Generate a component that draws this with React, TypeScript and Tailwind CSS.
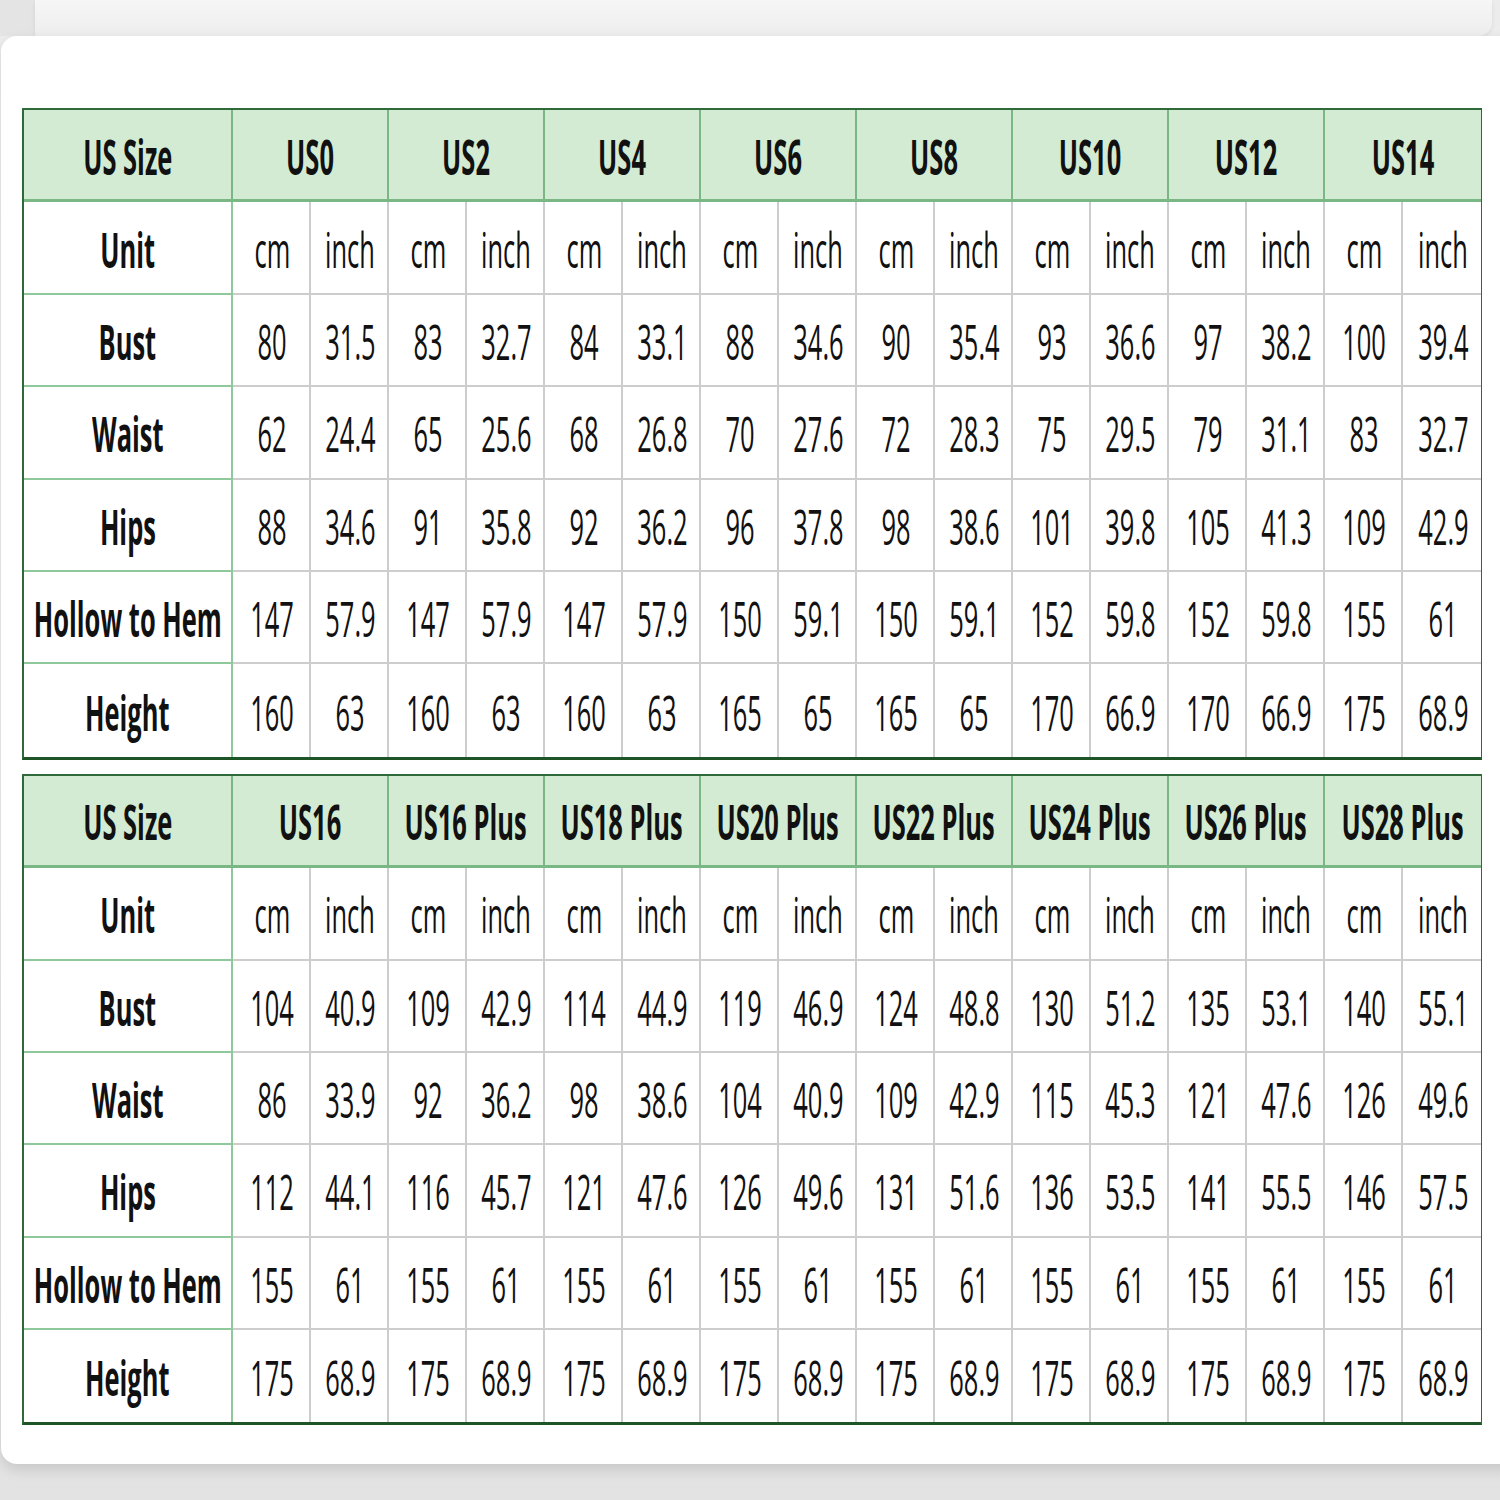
import React from "react";

type Row = { label: string; values: string[] };

const table1Head = ["US0", "US2", "US4", "US6", "US8", "US10", "US12", "US14"];
const table1: Row[] = [
  { label: "Bust", values: ["80", "31.5", "83", "32.7", "84", "33.1", "88", "34.6", "90", "35.4", "93", "36.6", "97", "38.2", "100", "39.4"] },
  { label: "Waist", values: ["62", "24.4", "65", "25.6", "68", "26.8", "70", "27.6", "72", "28.3", "75", "29.5", "79", "31.1", "83", "32.7"] },
  { label: "Hips", values: ["88", "34.6", "91", "35.8", "92", "36.2", "96", "37.8", "98", "38.6", "101", "39.8", "105", "41.3", "109", "42.9"] },
  { label: "Hollow to Hem", values: ["147", "57.9", "147", "57.9", "147", "57.9", "150", "59.1", "150", "59.1", "152", "59.8", "152", "59.8", "155", "61"] },
  { label: "Height", values: ["160", "63", "160", "63", "160", "63", "165", "65", "165", "65", "170", "66.9", "170", "66.9", "175", "68.9"] },
];

const table2Head = ["US16", "US16 Plus", "US18 Plus", "US20 Plus", "US22 Plus", "US24 Plus", "US26 Plus", "US28 Plus"];
const table2: Row[] = [
  { label: "Bust", values: ["104", "40.9", "109", "42.9", "114", "44.9", "119", "46.9", "124", "48.8", "130", "51.2", "135", "53.1", "140", "55.1"] },
  { label: "Waist", values: ["86", "33.9", "92", "36.2", "98", "38.6", "104", "40.9", "109", "42.9", "115", "45.3", "121", "47.6", "126", "49.6"] },
  { label: "Hips", values: ["112", "44.1", "116", "45.7", "121", "47.6", "126", "49.6", "131", "51.6", "136", "53.5", "141", "55.5", "146", "57.5"] },
  { label: "Hollow to Hem", values: ["155", "61", "155", "61", "155", "61", "155", "61", "155", "61", "155", "61", "155", "61", "155", "61"] },
  { label: "Height", values: ["175", "68.9", "175", "68.9", "175", "68.9", "175", "68.9", "175", "68.9", "175", "68.9", "175", "68.9", "175", "68.9"] },
];

function T({ children, bold }: { children: React.ReactNode; bold?: boolean }) {
  return (
    <span
      className={
        "inline-block scale-x-[0.52] whitespace-nowrap leading-none text-[49px] text-[#111111] font-['Open_Sans',sans-serif] " +
        (bold ? "font-bold" : "font-normal")
      }
    >
      {children}
    </span>
  );
}

function SizeTable({ head, rows }: { head: string[]; rows: Row[] }) {
  const unitRow: Row = {
    label: "Unit",
    values: Array.from({ length: 16 }, (_, i) => (i % 2 === 0 ? "cm" : "inch")),
  };
  const allRows = [unitRow, ...rows];
  return (
    <div className="w-[1460px] border-2 border-[#2f6b3a] border-b-[3px] border-b-[#1d5526]">
      <div className="grid grid-cols-[209px_repeat(16,78px)] grid-rows-[repeat(7,92.4px)] overflow-visible">
        <div className="flex items-center justify-center pt-[3px] bg-[#d2ebd2] border-r-2 border-b-[3px] border-[#79b784]">
          <T bold>US Size</T>
        </div>
        {head.map((h, i) => (
          <div
            key={h}
            className={
              "col-span-2 flex items-center justify-center pt-[3px] bg-[#d2ebd2] border-b-[3px] border-[#79b784] " +
              (i < head.length - 1 ? "border-r-2" : "")
            }
          >
            <T bold>{h}</T>
          </div>
        ))}
        {allRows.map((r, ri) => {
          const last = ri === allRows.length - 1;
          return (
            <React.Fragment key={r.label}>
              <div
                className={
                  "flex items-center justify-center pt-[3px] bg-white border-r-2 border-[#8fc89a] " +
                  (last ? "" : "border-b-2")
                }
              >
                <T bold>{r.label}</T>
              </div>
              {r.values.map((v, vi) => (
                <div
                  key={vi}
                  className={
                    "flex items-center justify-center pt-[3px] pl-[2px] bg-white border-[#cdcdcd] " +
                    (vi < 15 ? "border-r-2 " : "") +
                    (last ? "" : "border-b-2")
                  }
                >
                  <T>{v}</T>
                </div>
              ))}
            </React.Fragment>
          );
        })}
      </div>
    </div>
  );
}

export default function App() {
  return (
    <div className="w-[1500px] h-[1500px] overflow-hidden bg-gradient-to-b from-[#ececec] via-[#efefef] to-[#e3e3e3] flex flex-col">
      <div className="h-[36px] shrink-0 flex">
        <div className="w-[35px] bg-[#e4e4e4]" />
        <div className="flex-1 mr-[8px] bg-gradient-to-b from-[#f6f6f6] to-[#ededed] rounded-br-[14px] shadow-[0_2px_4px_rgba(0,0,0,0.08)]" />
      </div>
      <div className="ml-[1px] w-[1520px] h-[1428px] shrink-0 bg-white rounded-[16px] shadow-[0_6px_14px_rgba(0,0,0,0.12)] pt-[72px] pl-[21px] flex flex-col gap-[14px]">
        <SizeTable head={table1Head} rows={table1} />
        <SizeTable head={table2Head} rows={table2} />
      </div>
    </div>
  );
}
